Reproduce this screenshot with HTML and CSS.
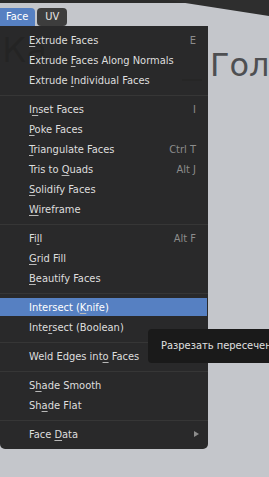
FILE: index.html
```html
<!DOCTYPE html>
<html lang="ru">
<head>
    <meta charset="UTF-8">
    <meta name="viewport" content="width=device-width, initial-scale=1.0">
    <title>Face Menu</title>
    <link rel="stylesheet" href="styles.css">
</head>
<body>
    <!-- viewport picture behind the menu -->
    <div class="scene">
        <svg class="scene-art" width="269" height="477" viewBox="0 0 269 477">
            <rect x="0" y="0" width="269" height="3" fill="#2b2b2b"/>
            <polygon points="166,0 269,0 269,16" fill="#2e2e2e"/>
            <rect x="182" y="79" width="20" height="2" fill="#5a5a5a"/>
        </svg>
        <div class="scene-title">Гола</div>
        <div class="scene-left">Ка</div>
    </div>

    <div class="header">
        <div class="tab tab-active">Face</div>
        <div class="tab">UV</div>
    </div>

    <div class="menu">
        <div class="item"><span><u>E</u>xtrude Faces</span><span class="key">E</span></div>
        <div class="item"><span>Extrude <u>F</u>aces Along Normals</span></div>
        <div class="item"><span>Extrude <u>I</u>ndividual Faces</span></div>
        <div class="sep"></div>
        <div class="item"><span>I<u>n</u>set Faces</span><span class="key">I</span></div>
        <div class="item"><span><u>P</u>oke Faces</span></div>
        <div class="item"><span><u>T</u>riangulate Faces</span><span class="key">Ctrl T</span></div>
        <div class="item"><span>Tris to <u>Q</u>uads</span><span class="key">Alt J</span></div>
        <div class="item"><span><u>S</u>olidify Faces</span></div>
        <div class="item"><span><u>W</u>ireframe</span></div>
        <div class="sep"></div>
        <div class="item"><span>Fi<u>l</u>l</span><span class="key">Alt F</span></div>
        <div class="item"><span><u>G</u>rid Fill</span></div>
        <div class="item"><span><u>B</u>eautify Faces</span></div>
        <div class="sep"></div>
        <div class="item active"><span>Intersect (<u>K</u>nife)</span></div>
        <div class="item"><span>Inte<u>r</u>sect (Boolean)</span></div>
        <div class="sep"></div>
        <div class="item"><span>Weld Edges int<u>o</u> Faces</span></div>
        <div class="sep"></div>
        <div class="item"><span>S<u>h</u>ade Smooth</span></div>
        <div class="item"><span>Sh<u>a</u>de Flat</span></div>
        <div class="sep"></div>
        <div class="item"><span>Face <u>D</u>ata</span><span class="arrow"></span></div>
    </div>

    <div class="tooltip">Разрезать пересечения</div>
</body>
</html>
```

FILE: styles.css
```css
body {
    margin: 0;
    width: 269px;
    height: 477px;
    overflow: hidden;
    position: relative;
    background: #c4c6cb;
    font-family: 'DejaVu Sans Condensed', 'DejaVu Sans', sans-serif;
    font-size: 11px;
    color: #dedede;
}
.scene {
    position: absolute;
    left: 0;
    top: 0;
    width: 269px;
    height: 477px;
    overflow: hidden;
}
.scene-art {
    position: absolute;
    left: 0;
    top: 0;
}
.scene-title {
    position: absolute;
    left: 210px;
    top: 46px;
    font-family: 'DejaVu Sans', sans-serif;
    font-size: 32px;
    color: #4e4f52;
}
.scene-left {
    position: absolute;
    left: 2px;
    top: 30px;
    font-family: 'DejaVu Sans', sans-serif;
    font-size: 34px;
    color: #303030;
}
.header {
    position: relative;
    display: flex;
    gap: 2px;
    padding-top: 8px;
    height: 18px;
}
.tab {
    height: 18px;
    line-height: 18px;
    padding: 0 8px;
    border-radius: 4px;
    background: #3d3d3d;
    color: #e6e6e6;
}
.tab-active {
    background: #5680c2;
    color: #ffffff;
    border-radius: 0 4px 0 0;
    padding: 0 7px 0 6px;
}
.menu {
    position: relative;
    width: 208px;
    box-sizing: border-box;
    padding: 4px 0 5px;
    background: rgba(36, 36, 36, 0.97);
    border-radius: 0 0 5px 5px;
}
.item {
    display: flex;
    justify-content: space-between;
    align-items: center;
    height: 20px;
    padding: 0 12px 0 29px;
}
.item u {
    text-decoration-thickness: 1px;
    text-underline-offset: 2px;
    text-decoration-color: #b8b8b8;
}
.item.active {
    height: 18px;
    margin: 1px 1px 1px 0;
    background: #5680c2;
    color: #ffffff;
}
.key {
    color: #8c8c8c;
}
.arrow {
    width: 0;
    height: 0;
    margin-right: -3px;
    border-left: 5px solid #8c8c8c;
    border-top: 3px solid transparent;
    border-bottom: 3px solid transparent;
}
.sep {
    height: 9px;
    background: linear-gradient(#363636, #363636) 0 5px / 100% 1px no-repeat;
}
.tooltip {
    position: absolute;
    left: 148px;
    top: 329px;
    width: 121px;
    height: 34px;
    box-sizing: border-box;
    padding-left: 13px;
    line-height: 34px;
    white-space: nowrap;
    overflow: hidden;
    background: #1a1a1a;
    border-radius: 4px 0 0 4px;
    color: #e0e0e0;
}
```
